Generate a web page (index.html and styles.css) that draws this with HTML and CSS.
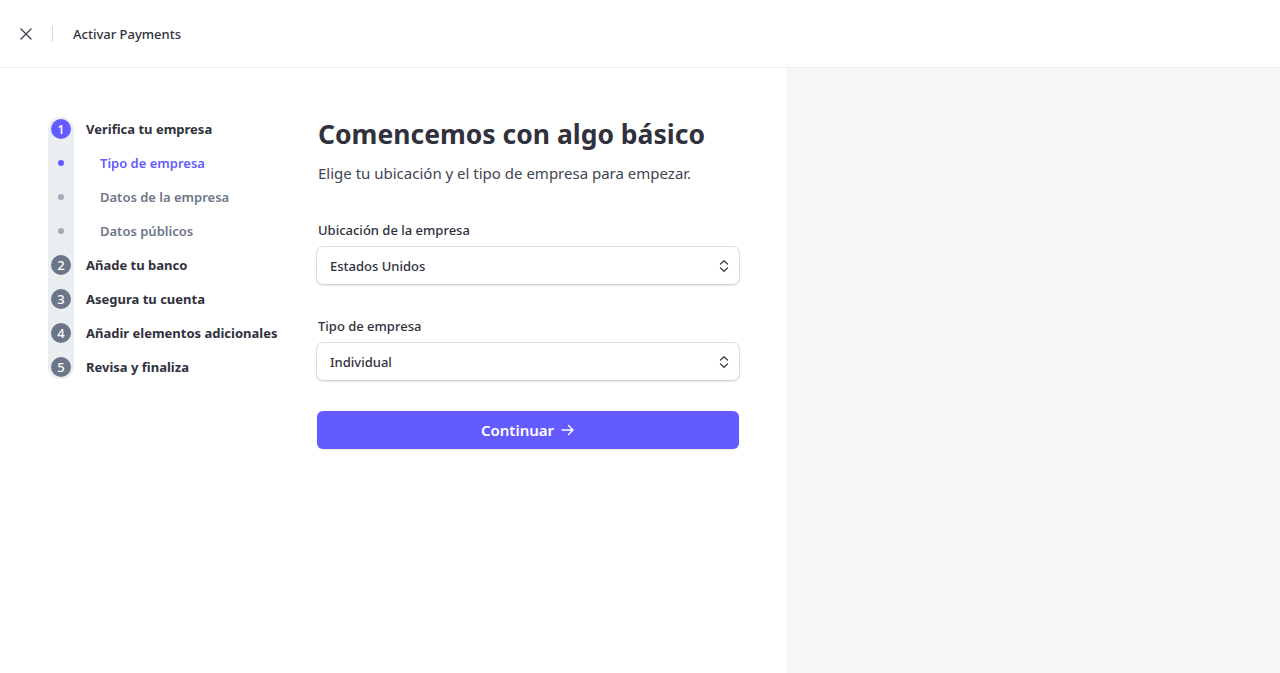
FILE: index.html
```html
<!DOCTYPE html>
<html lang="es">
<head>
<meta charset="utf-8">
<title>Activar Payments</title>
<link rel="stylesheet" href="styles.css">
</head>
<body>
<header class="topbar">
  <button class="close-btn" aria-label="Cerrar">
    <svg width="12" height="12" viewBox="0 0 12 12"><path d="M1 1 L11 11 M11 1 L1 11" stroke="#414552" stroke-width="1.4" stroke-linecap="round"/></svg>
  </button>
  <span class="divider"></span>
  <span class="title">Activar Payments</span>
</header>
<div class="layout">
  <main class="main">
    <nav class="stepper">
      <div class="rail"></div>
      <ul class="steps">
        <li class="step active"><span class="num">1</span><span class="label">Verifica tu empresa</span></li>
        <li class="sub current"><span class="dot"></span><span class="label">Tipo de empresa</span></li>
        <li class="sub"><span class="dot"></span><span class="label">Datos de la empresa</span></li>
        <li class="sub"><span class="dot"></span><span class="label">Datos públicos</span></li>
        <li class="step"><span class="num">2</span><span class="label">Añade tu banco</span></li>
        <li class="step"><span class="num">3</span><span class="label">Asegura tu cuenta</span></li>
        <li class="step"><span class="num">4</span><span class="label">Añadir elementos adicionales</span></li>
        <li class="step"><span class="num">5</span><span class="label">Revisa y finaliza</span></li>
      </ul>
    </nav>
    <section class="form">
      <h1>Comencemos con algo básico</h1>
      <p class="lead">Elige tu ubicación y el tipo de empresa para empezar.</p>
      <div class="field">
        <label>Ubicación de la empresa</label>
        <div class="select"><span>Estados Unidos</span>
          <svg width="10" height="14" viewBox="0 0 10 14"><path d="M1.5 5 L5 1.8 L8.5 5 M1.5 9 L5 12.2 L8.5 9" fill="none" stroke="#414552" stroke-width="1.4" stroke-linecap="round" stroke-linejoin="round"/></svg>
        </div>
      </div>
      <div class="field">
        <label>Tipo de empresa</label>
        <div class="select"><span>Individual</span>
          <svg width="10" height="14" viewBox="0 0 10 14"><path d="M1.5 5 L5 1.8 L8.5 5 M1.5 9 L5 12.2 L8.5 9" fill="none" stroke="#414552" stroke-width="1.4" stroke-linecap="round" stroke-linejoin="round"/></svg>
        </div>
      </div>
      <button class="continue">Continuar
        <svg width="14" height="12" viewBox="0 0 14 12"><path d="M1 6 H12 M7.5 1.5 L12 6 L7.5 10.5" fill="none" stroke="#fff" stroke-width="1.4" stroke-linecap="round" stroke-linejoin="round"/></svg>
      </button>
    </section>
  </main>
  <aside class="side"></aside>
</div>
</body>
</html>
```
FILE: styles.css
```css
* { box-sizing: border-box; }
html, body { margin: 0; padding: 0; height: 100%; }
body {
  font-family: "Noto Sans", "Open Sans", "Liberation Sans", sans-serif;
  color: #30313d;
  background: #fff;
  display: flex;
  flex-direction: column;
}
.topbar {
  height: 68px;
  border-bottom: 1px solid #ebeef1;
  display: flex;
  align-items: center;
  padding-left: 20px;
  flex-shrink: 0;
}
.close-btn {
  background: none; border: 0; padding: 0; width: 12px; height: 12px;
  display: flex; cursor: pointer;
}
.divider {
  width: 1px; height: 16px; background: #d5dbe1; margin-left: 20px; margin-right: 20px;
}
.title { font-size: 13px; font-weight: 500; color: #30313d; }
.layout { flex: 1; display: flex; }
.main { width: 786px; display: flex; padding-top: 44px; padding-left: 48px; }
.side { flex: 1; background: #f6f7f9; }

.stepper { position: relative; width: 270px; }
.rail {
  position: absolute; left: 0; top: 5px; width: 26px; height: 262px;
  background: #ebeef1; border-radius: 13px;
}
.steps { list-style: none; margin: 0; padding: 0; position: relative; }
.steps li { height: 34px; display: flex; align-items: center; }
.step .num {
  width: 20px; height: 20px; border-radius: 50%;
  background: #6c7688; color: #fff;
  font-size: 13px; font-weight: 500;
  display: flex; align-items: center; justify-content: center;
  margin-left: 3px; margin-right: 15px;
}
.step.active .num { background: #635bff; }
.step .label { font-size: 13px; font-weight: 700; color: #30313d; }
.sub .dot {
  width: 6px; height: 6px; border-radius: 50%; background: #a3acba;
  margin-left: 10px; margin-right: 36px;
}
.sub .label { font-size: 13px; font-weight: 600; color: #6c7688; }
.sub.current .dot { background: #635bff; }
.sub.current .label { color: #635bff; }

.form { width: 422px; margin-left: -1px; padding-top: 4px; }
.form h1 {
  margin: 0; font-size: 26.5px; font-weight: 700; line-height: 36px; color: #30313d;
  padding-left: 1px;
}
.lead { margin: 9px 0 0 1px; font-size: 15px; line-height: 24px; color: #414552; }
.field { margin-top: 35px; }
.field + .field { margin-top: 32px; }
.field label { display: block; font-size: 13px; font-weight: 500; line-height: 20px; color: #30313d; padding-left: 1px; }
.select {
  margin-top: 7px; height: 37px; border-radius: 6px;
  background: #fff;
  box-shadow: 0 0 0 1px rgba(64,68,82,0.16), 0 2px 3px rgba(64,68,82,0.12);
  display: flex; align-items: center; justify-content: space-between;
  padding: 0 10px 0 13px;
  font-size: 13px; font-weight: 500; color: #30313d;
}
.continue {
  margin-top: 31px; width: 422px; height: 38px; border: 0; border-radius: 6px;
  background: #635bff; color: #fff;
  font-family: inherit; font-size: 15px; font-weight: 600;
  display: flex; align-items: center; justify-content: center; gap: 7px;
  box-shadow: 0 1px 2px rgba(0,0,0,0.1);
}
```
